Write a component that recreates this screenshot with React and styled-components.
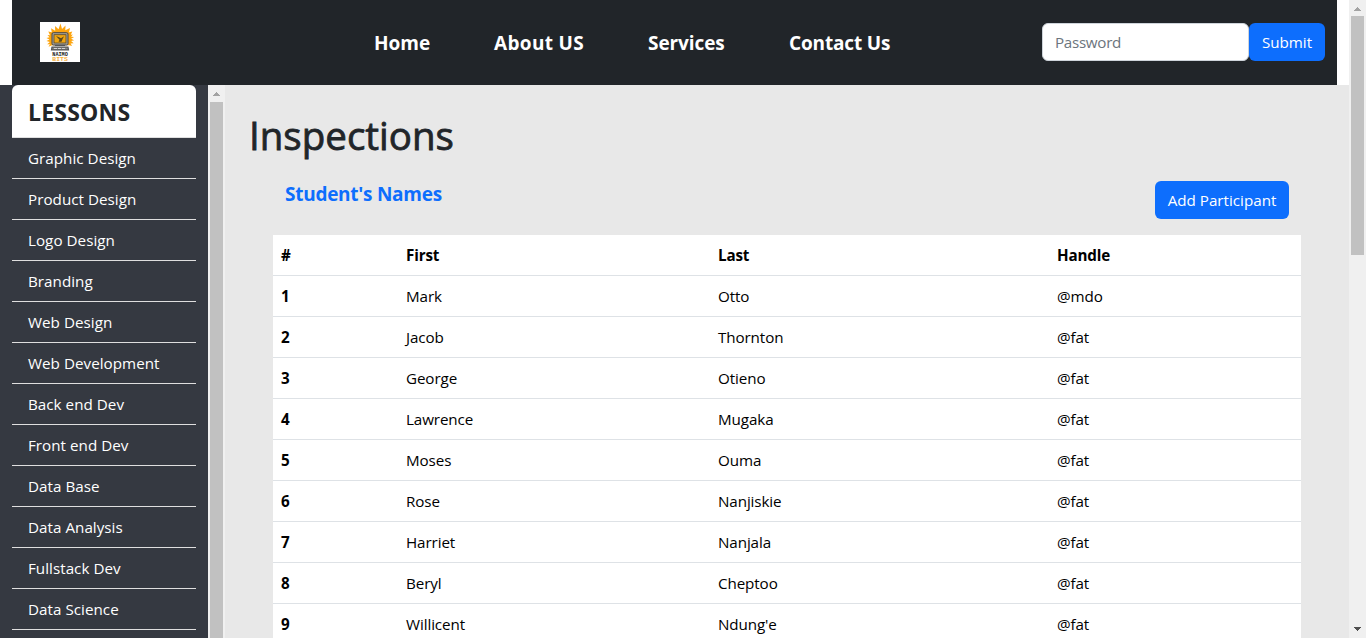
import React from "react";
import styled, { createGlobalStyle, css } from "styled-components";

const GlobalStyle = createGlobalStyle`
  *, *::before, *::after { box-sizing: border-box; }
  html, body { margin: 0; height: 638px; overflow: hidden; background: #fff; }
  body {
    font-family: "Segoe UI", "Open Sans", "Noto Sans", sans-serif;
    font-size: 15.2px;
    line-height: 24px;
    color: #212529;
  }
`;

const Screen = styled.div`
  display: flex;
  width: 1366px;
  height: 638px;
  overflow: hidden;
`;

const Page = styled.div`
  display: flex;
  flex-direction: column;
  width: 1349px;
  height: 638px;
`;

const Header = styled.header`
  display: flex;
  align-items: center;
  flex: none;
  height: 85px;
  margin: 0 12px;
  padding: 0 12px 1px 28px;
  background: #212529;
`;

const LogoMark = styled.svg`
  display: block;
  flex: none;
  width: 40px;
  height: 40px;
  margin-right: 294px;
`;

const Nav = styled.nav`
  display: flex;
  gap: 64px;
  flex: 1;
  padding-top: 1px;
`;

const NavLink = styled.a`
  width: ${(p) => p.$width}px;
  color: #fff;
  font-size: 19px;
  font-weight: 700;
  line-height: 30px;
  white-space: nowrap;
  letter-spacing: ${(p) => p.$track || 0}px;
`;

const SearchForm = styled.form`
  display: flex;
  flex: none;
`;

const PasswordInput = styled.input`
  width: 207px;
  height: 38px;
  padding: 6px 12px;
  border: 1px solid #ced4da;
  border-radius: 6px;
  background: #fff;
  font: inherit;
  letter-spacing: -0.3px;
  outline: none;
  &::placeholder { color: #6c757d; opacity: 1; }
`;

const Button = styled.button`
  width: ${(p) => p.$width}px;
  height: 38px;
  padding: 0;
  border: 0;
  border-radius: 6px;
  background: #0d6efd;
  color: #fff;
  font: inherit;
  white-space: nowrap;
`;

const Body = styled.div`
  display: flex;
  flex: 1;
  min-height: 0;
  overflow: hidden;
`;

const Sidebar = styled.aside`
  flex: none;
  width: 208px;
  padding: 0 12px;
  background: #353941;
`;

const SidebarTitle = styled.div`
  height: 53px;
  padding: 12px 16px 10px;
  border-bottom: 1px solid #dfdfdf;
  border-radius: 6px 6px 0 0;
  background: #fff;
  font-size: 23px;
  font-weight: 700;
  line-height: 31px;
  letter-spacing: 0.2px;
`;

const Lesson = styled.a`
  display: block;
  height: 41px;
  padding: 8px 16px;
  border-bottom: 1px solid #dfdfdf;
  color: #fff;
  white-space: nowrap;
  letter-spacing: 0.03px;
`;

const Track = styled.div`
  display: flex;
  flex-direction: column;
  align-items: center;
  flex: none;
  width: 17px;
  background: #f0f0f0;
`;

const ArrowBox = styled.svg`
  display: block;
  flex: none;
  width: 17px;
  height: ${(p) => p.$height}px;
`;

const Thumb = styled.div`
  width: 13px;
  background: #c1c1c1;
  ${(p) => (p.$height ? css`height: ${p.$height}px; margin-bottom: auto;` : css`flex: 1;`)}
`;

const Main = styled.main`
  flex: 1;
  padding: 24px 48px 0 24px;
  background: #e8e8e8;
`;

const Title = styled.h1`
  margin: 0;
  height: 56px;
  font-size: 38.5px;
  font-weight: 500;
  line-height: 52px;
  -webkit-text-stroke: 0.8px currentColor;
`;

const Section = styled.section`
  padding-left: 24px;
`;

const SectionBar = styled.div`
  display: flex;
  justify-content: space-between;
  align-items: flex-start;
  height: 70px;
  padding: 16px 12px 0;
`;

const SectionTitle = styled.h2`
  margin: 0;
  color: #0d6efd;
  font-size: 19px;
  font-weight: 700;
  line-height: 26px;
  letter-spacing: -0.27px;
`;

const Table = styled.table`
  width: 1028px;
  table-layout: fixed;
  border-collapse: separate;
  border-spacing: 0;
  background: #fff;
  color: #000;
`;

const Row = styled.tr`
  height: 41px;
`;

const Cell = styled.td`
  width: ${(p) => p.$width}px;
  padding: 8px;
  border-bottom: 1px solid #dee2e6;
  text-align: left;
  font-weight: ${(p) => (p.$bold ? 700 : 400)};
  letter-spacing: ${(p) => (p.$bold ? -0.15 : -0.1)}px;
`;

const lessons = [
  "Graphic Design", "Product Design", "Logo Design", "Branding", "Web Design",
  "Web Development", "Back end Dev", "Front end Dev", "Data Base",
  "Data Analysis", "Fullstack Dev", "Data Science",
];

const students = [
  ["Mark", "Otto", "@mdo"],
  ["Jacob", "Thornton", "@fat"],
  ["George", "Otieno", "@fat"],
  ["Lawrence", "Mugaka", "@fat"],
  ["Moses", "Ouma", "@fat"],
  ["Rose", "Nanjiskie", "@fat"],
  ["Harriet", "Nanjala", "@fat"],
  ["Beryl", "Cheptoo", "@fat"],
  ["Willicent", "Ndung'e", "@fat"],
];

const Arrow = ({ down, height = 17 }) => (
  <ArrowBox $height={height} viewBox={`0 0 17 ${height}`} shapeRendering="crispEdges">
    {down ? (
      <path d="M5 6h7v1h-1v1h-1v1h-1v1h-1v-1h-1v-1h-1v-1h-1z" fill="#505050" />
    ) : (
      <path d="M5 11v-1h1v-1h1v-1h1v-1h1v1h1v1h1v1h1v1z" fill="#a3a3a3" />
    )}
  </ArrowBox>
);

const Logo = () => (
  <LogoMark viewBox="0 0 40 40">
    <rect width="40" height="40" fill="#fff" />
    <path
      fill="#fda50f"
      d="M20.500 1.500l1.500 5.500L25.500 3.500l-.2 4.800L30 6l-1 4.200 3.300-.7-1.500 3.200 2-.2-1.700 2.200 3 .3-3 1.700 3 1.500-3 .8 2.500 2.300-3 .1 1.500 2.500-3-.7H12l-3.500 1.500 1.500-2.500-2.800.1 2.600-2.400L6.500 19l3-1.600-3-1.400 3-.7-2-2.300 2.500.2L8.300 9.500l3.500.7L11 6.300l4.200 2.400L15 4l3.500 3.300z"
    />
    <rect x="12" y="10.700" width="16" height="12.300" rx="1.300" fill="#aaa59a" stroke="#454548" strokeWidth="1" />
    <rect x="14" y="12.700" width="12" height="8.300" fill="#efa511" stroke="#55482b" strokeWidth=".8" />
    <path d="M16 14l3 1.300 2 1 3-2-1.500 3-1 2.500h-3l1-2z" fill="#5c471a" />
    <path d="M15 23.500h10M12 25.200h16l.5 2.700h-17z" fill="#888" stroke="#555" strokeWidth="1.200" />
    <path d="M14 26.500h12" stroke="#ddd" strokeWidth=".9" strokeDasharray="3 1" />
    <text x="12.300" y="34.300" fontFamily="Liberation Mono, monospace" fontWeight="700" fontSize="6" textLength="15.500" lengthAdjust="spacingAndGlyphs" fill="#222">NAIMO</text>
    <text x="12.300" y="39" fontFamily="Liberation Mono, monospace" fontWeight="700" fontSize="6" textLength="15.500" lengthAdjust="spacingAndGlyphs" fill="#f8b03b">BITS</text>
  </LogoMark>
);

export default function App() {
  return (
    <>
      <GlobalStyle />
      <Screen>
        <Page>
          <Header>
            <Logo />
            <Nav>
              <NavLink $width={56}>Home</NavLink>
              <NavLink $width={90} $track={0.33}>About US</NavLink>
              <NavLink $width={77} $track={-0.08}>Services</NavLink>
              <NavLink $width={102} $track={-0.15}>Contact Us</NavLink>
            </Nav>
            <SearchForm>
              <PasswordInput type="password" placeholder="Password" />
              <Button type="button" $width={76}>Submit</Button>
            </SearchForm>
          </Header>
          <Body>
            <Sidebar>
              <SidebarTitle>LESSONS</SidebarTitle>
              {lessons.map((name) => (
                <Lesson key={name}>{name}</Lesson>
              ))}
            </Sidebar>
            <Track>
              <Arrow />
              <Thumb />
            </Track>
            <Main>
              <Title>Inspections</Title>
              <Section>
                <SectionBar>
                  <SectionTitle>Student's Names</SectionTitle>
                  <Button type="button" $width={134}>Add Participant</Button>
                </SectionBar>
                <Table>
                  <thead>
                    <Row>
                      <Cell as="th" $bold $width={125}>#</Cell>
                      <Cell as="th" $bold $width={312}>First</Cell>
                      <Cell as="th" $bold $width={339}>Last</Cell>
                      <Cell as="th" $bold $width={252}>Handle</Cell>
                    </Row>
                  </thead>
                  <tbody>
                    {students.map(([first, last, handle], i) => (
                      <Row key={first}>
                        <Cell as="th" $bold>{i + 1}</Cell>
                        <Cell>{first}</Cell>
                        <Cell>{last}</Cell>
                        <Cell>{handle}</Cell>
                      </Row>
                    ))}
                  </tbody>
                </Table>
              </Section>
            </Main>
          </Body>
        </Page>
        <Track>
          <Arrow height={16} />
          <Thumb $height={239} />
          <Arrow down />
        </Track>
      </Screen>
    </>
  );
}
